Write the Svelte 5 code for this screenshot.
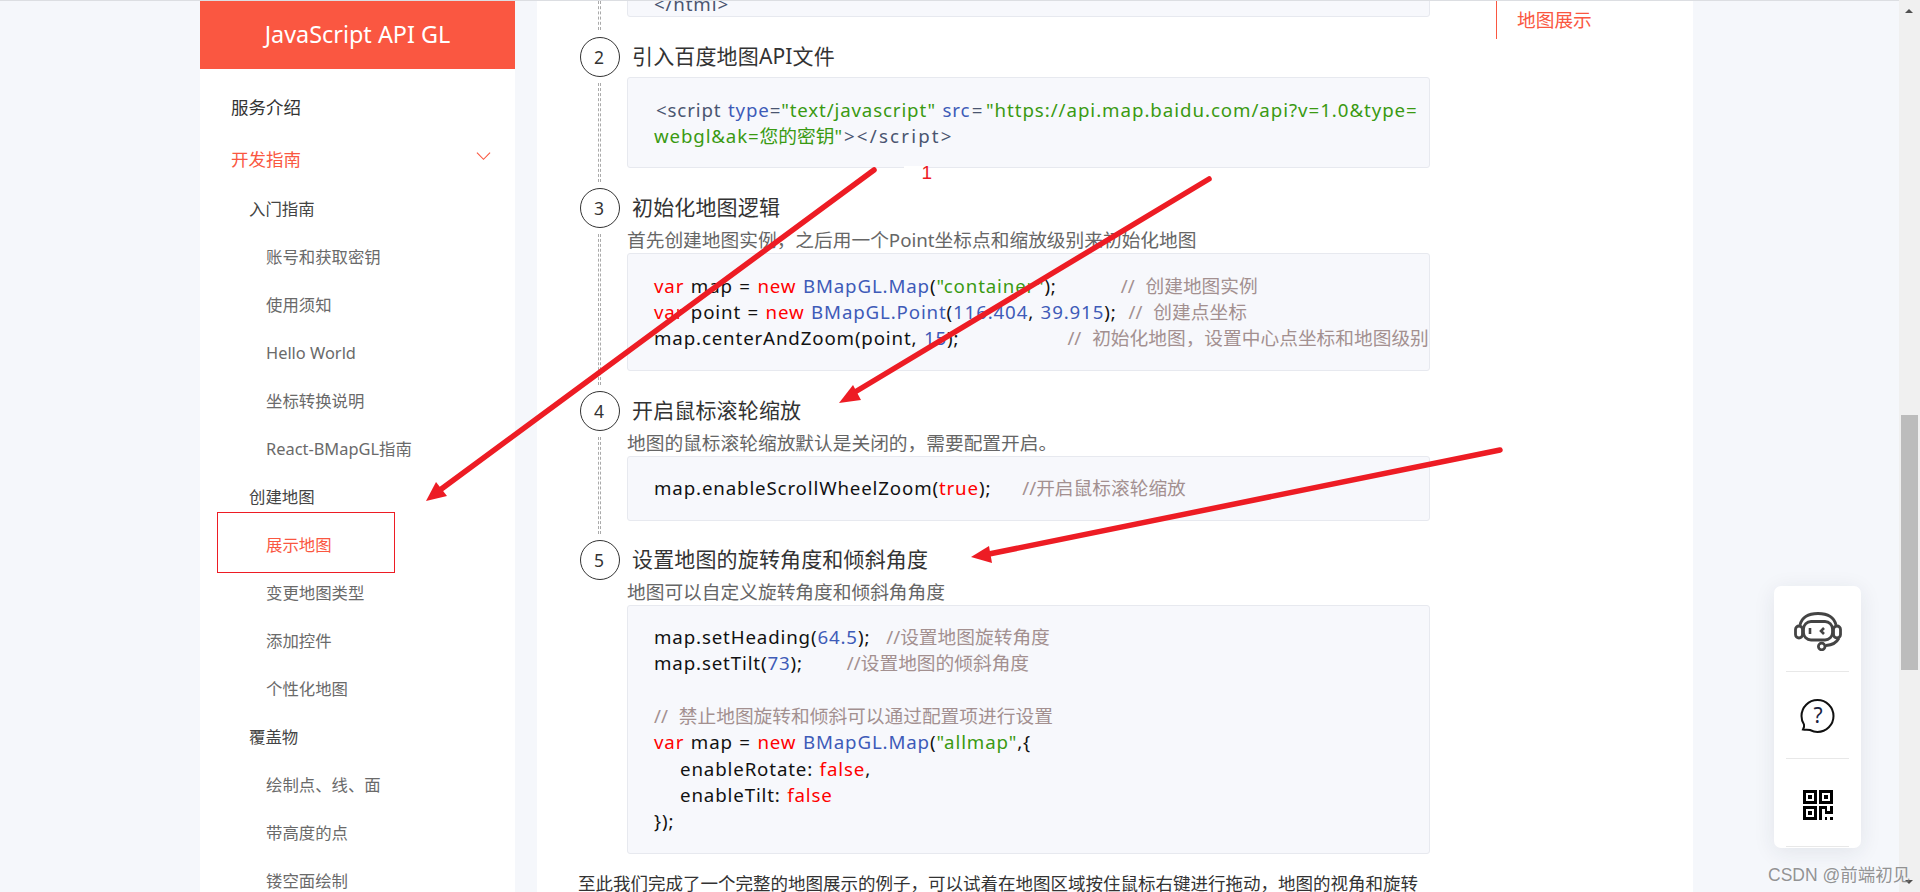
<script>
  const nav = [
    { t: '服务介绍', l: 1 },
    { t: '开发指南', l: 1, active: true, open: true },
    { t: '入门指南', l: 2 },
    { t: '账号和获取密钥', l: 3 },
    { t: '使用须知', l: 3 },
    { t: 'Hello World', l: 3 },
    { t: '坐标转换说明', l: 3 },
    { t: 'React-BMapGL指南', l: 3 },
    { t: '创建地图', l: 2 },
    { t: '展示地图', l: 3, active: true },
    { t: '变更地图类型', l: 3 },
    { t: '添加控件', l: 3 },
    { t: '个性化地图', l: 3 },
    { t: '覆盖物', l: 2 },
    { t: '绘制点、线、面', l: 3 },
    { t: '带高度的点', l: 3 },
    { t: '镂空面绘制', l: 3 }
  ];
</script>

<div class="page">
  <div class="view">
    <aside class="side">
      <div class="brand">JavaScript API GL</div>
      <ul class="nav">
        {#each nav as item}
          <li class="item l{item.l}" class:active={item.active}>
            <span>{item.t}</span>
            {#if item.open}
              <svg class="chev" width="16" height="10" viewBox="0 0 16 10"><path d="M1 1.5 L8 8.5 L15 1.5" fill="none" stroke="#fa5741" stroke-width="1.2"/></svg>
            {/if}
          </li>
        {/each}
      </ul>
    </aside>

    <main class="doc">
      <section class="step tail">
        <div class="rail"><i class="dash"></i></div>
        <div class="body">
          <pre class="code cut"><span class="tag">&lt;/html&gt;</span></pre>
        </div>
      </section>

      <section class="step">
        <div class="rail"><b class="num">2</b><i class="dash"></i></div>
        <div class="body">
          <h3>引入百度地图API文件</h3>
          <pre class="code"><span class="tag first">&lt;script</span> <span class="cls">type</span><span class="tag">=</span><span class="str">"text/javascript"</span> <span class="cls">src</span><span class="tag eq">=</span><span class="str wide">"https://api.map.baidu.com/api?v=1.0&amp;type=</span>
<span class="str">webgl&amp;ak=<span class="zh">您的密钥</span>"</span><span class="tag close">&gt;&lt;/script&gt;</span></pre>
        </div>
      </section>

      <section class="step">
        <div class="rail"><b class="num">3</b><i class="dash"></i></div>
        <div class="body">
          <h3>初始化地图逻辑</h3>
          <p class="desc">首先创建地图实例，之后用一个Point坐标点和缩放级别来初始化地图</p>
          <pre class="code"><span class="kw">var</span> map = <span class="kw">new</span> <span class="cls">BMapGL.Map</span>(<span class="str">"container"</span>);<span class="com c1">// 创建地图实例</span>
<span class="kw">var</span> point = <span class="kw">new</span> <span class="cls">BMapGL.Point</span>(<span class="cls">116.404</span>, <span class="cls">39.915</span>);<span class="com c2">// 创建点坐标</span>
map.centerAndZoom(point, <span class="cls">15</span>);<span class="com c3">// 初始化地图，设置中心点坐标和地图级别</span></pre>
        </div>
      </section>

      <section class="step four">
        <div class="rail"><b class="num">4</b><i class="dash"></i></div>
        <div class="body">
          <h3>开启鼠标滚轮缩放</h3>
          <p class="desc">地图的鼠标滚轮缩放默认是关闭的，需要配置开启。</p>
          <pre class="code"><span>map.enableScrollWheelZoom(</span><span class="kw">true</span>);<span class="com c4">//开启鼠标滚轮缩放</span></pre>
        </div>
      </section>

      <section class="step last">
        <div class="rail"><b class="num">5</b></div>
        <div class="body">
          <h3>设置地图的旋转角度和倾斜角度</h3>
          <p class="desc">地图可以自定义旋转角度和倾斜角角度</p>
          <pre class="code">map.setHeading(<span class="cls">64.5</span>);<span class="com c5">//设置地图旋转角度</span>
map.setTilt(<span class="cls">73</span>);<span class="com c6">//设置地图的倾斜角度</span>

<span class="com">// 禁止地图旋转和倾斜可以通过配置项进行设置</span>
<span class="kw">var</span> map = <span class="kw">new</span> <span class="cls">BMapGL.Map</span>(<span class="str">"allmap"</span>,&#123;
    enableRotate: <span class="kw">false</span>,
    enableTilt: <span class="kw">false</span>
&#125;);</pre>
        </div>
      </section>

      <p class="outro">至此我们完成了一个完整的地图展示的例子，可以试着在地图区域按住鼠标右键进行拖动，地图的视角和旋转</p>

      <nav class="toc"><span>地图展示</span></nav>
    </main>

    <div class="float">
      <div class="cell one">
        <svg width="48" height="39" viewBox="0 0 48 39" fill="none" stroke="#444" stroke-width="2.8">
          <path d="M6 13 C8 5 15 1.500 24 1.500 C33 1.500 40 5 42 13"/>
          <rect x="9.5" y="9.5" width="29" height="18.5" rx="7.5"/>
          <rect x="1.500" y="14" width="7" height="12" rx="3.5"/>
          <rect x="39.500" y="14" width="7" height="12" rx="3.5"/>
          <path d="M16 16 V22 M30 16 L27 19 L30 22" stroke-width="2.6"/>
          <path d="M45 26 C43 30 38 33 32 33.5"/>
          <circle cx="27.7" cy="34.5" r="3.3"/>
        </svg>
      </div>
      <div class="cell two">
        <svg width="36" height="36" viewBox="0 0 36 36">
          <path d="M3 31.5 C4 29.5 4.5 28 4 26.5 C1.800 23.500 1.500 20.500 1.500 18 A16 16 0 1 1 17.500 34 C14.500 34 12 33 10 32 C8 31.500 5.500 32 3 31.500 Z" fill="none" stroke="#111" stroke-width="2"/>
          <text x="18" y="25" text-anchor="middle" class="qm">?</text>
        </svg>
      </div>
      <div class="cell three">
        <svg width="30" height="30" viewBox="0 0 30 30" fill="#000">
          <path fill-rule="evenodd" d="M0 0H14V14H0Z M3 3V11H11V3Z M16 0H30V14H16Z M19 3V11H27V3Z M0 16H14V30H0Z M3 19V27H11V19Z"/>
          <rect x="5" y="5" width="4" height="4"/>
          <rect x="21" y="5" width="4" height="4"/>
          <rect x="5" y="21" width="4" height="4"/>
          <path d="M16 16H19V30H16Z M19 16H24V19H19Z M22 19H24V24H22Z M24 21H27V24H24Z M27 16H30V24H27Z M22 27H24V30H22Z M27 27H30V30H27Z"/>
        </svg>
      </div>
    </div>

    <span class="mark">CSDN @前端初见</span>
  </div>

  <div class="bar">
    <i class="up"></i>
    <i class="thumb"></i>
    <i class="down"></i>
  </div>

  <svg class="marks" width="1920" height="892" viewBox="0 0 1920 892">
    <rect x="217.500" y="512.500" width="177" height="60" fill="none" stroke="#ed1c24" stroke-width="1"/>
    <rect x="904" y="166" width="20" height="5" fill="#fff"/>
    <text x="921.500" y="179" class="one-mark">1</text>
    <g stroke="#ed1c24" stroke-width="5.500" stroke-linecap="round" fill="#ed1c24">
      <line x1="874" y1="170" x2="440" y2="490"/>
      <line x1="1209" y1="179" x2="855" y2="392"/>
      <line x1="1500" y1="450" x2="989" y2="554"/>
    </g>
    <g fill="#ed1c24">
      <polygon points="426,501 436,482 447,496"/>
      <polygon points="839,403 853,385 861,400"/>
      <polygon points="971,557 989,546 992,563"/>
    </g>
  </svg>
</div>

<style>
  :global(html), :global(body) {
    margin: 0;
    height: 892px;
    overflow: hidden;
  }
  .page {
    position: relative;
    display: flex;
    width: 1920px;
    height: 892px;
    overflow: hidden;
    font-family: "Noto Sans", "Noto Sans CJK SC", sans-serif;
    background: #f5f7fb;
  }
  .view {
    position: relative;
    flex: 1;
    display: flex;
    align-items: flex-start;
    padding-left: 200px;
    border-top: 1px solid #dcdee2;
    box-sizing: border-box;
    height: 892px;
  }
  .side {
    width: 315px;
    height: 891px;
    background: #fff;
    flex: none;
    overflow: hidden;
  }
  .brand {
    height: 68px;
    background: #fa5741;
    color: #fff;
    font-size: 23.400px;
    line-height: 66px;
    text-align: center;
  }
  .nav {
    list-style: none;
    margin: 0;
    padding: 11px 0 0;
  }
  .item {
    position: relative;
    height: 48px;
    display: flex;
    align-items: center;
    font-size: 16.4px;
  }
  .l1 {
    height: 52px;
    padding-left: 31px;
    font-size: 17.5px;
    color: #333;
  }
  .l2 {
    padding-left: 49px;
    color: #444;
  }
  .l3 {
    padding-left: 66px;
    color: #6a6a6a;
  }
  .item.active {
    color: #fa5741;
  }
  .chev {
    position: absolute;
    left: 276px;
    top: 19px;
    width: 15px;
  }
  .doc {
    position: relative;
    width: 1156px;
    height: 891px;
    margin-left: 22px;
    padding-left: 43px;
    box-sizing: border-box;
    background: #fff;
    flex: none;
    overflow: hidden;
  }
  .step {
    display: grid;
    grid-template-columns: 47px 803px;
  }
  .rail {
    display: flex;
    flex-direction: column;
  }
  .num {
    flex: none;
    width: 40px;
    height: 40px;
    box-sizing: border-box;
    border: 1px solid #333;
    border-radius: 50%;
    padding-right: 2px;
    display: flex;
    align-items: center;
    justify-content: center;
    font-size: 17.5px;
    font-weight: 400;
    color: #333;
  }
  .dash {
    flex: 1;
    width: 1px;
    margin: 6px 0 6px 18px;
    border-left: 1px dashed #aaa;
    border-right: 1px dashed #aaa;
  }
  .tail .dash {
    margin-top: 0;
    margin-bottom: 7px;
  }
  .body {
    padding-bottom: 20px;
    min-width: 0;
  }
  .four .body {
    padding-bottom: 19px;
  }
  .last .body {
    padding-bottom: 0;
  }
  h3 {
    margin: 0;
    height: 40px;
    padding-left: 5px;
    font-size: 21px;
    font-weight: 400;
    line-height: 38px;
    letter-spacing: 0.15px;
    color: #333;
  }
  .desc {
    margin: 0;
    height: 25px;
    font-size: 18.72px;
    line-height: 23px;
    color: #666;
    white-space: nowrap;
  }
  .code {
    margin: 0;
    padding: 18.300px 0 18.300px 26px;
    border: 1px solid #e7e9ef;
    border-radius: 3px;
    background: #f7f8fc;
    font-family: "Noto Sans", "Noto Sans CJK SC", sans-serif;
    font-size: 18.720px;
    line-height: 26.300px;
    letter-spacing: 0.85px;
    word-spacing: 0.8px;
    color: #111;
    white-space: pre;
    overflow: hidden;
  }
  .cut {
    padding-top: 2px;
    padding-bottom: 1px;
    margin-top: -13px;
    height: 24.300px;
  }
  .first {
    margin-left: 2px;
  }
  .eq {
    letter-spacing: 3.500px;
    margin-left: 1.500px;
  }
  .wide { letter-spacing: 0.94px; }
  .close { letter-spacing: 2.200px; margin-left: 1px; }
  .zh { letter-spacing: 0; }
  .kw { color: #f00; }
  .cls { color: #3e5bb8; }
  .str { color: #3a9a12; }
  .tag { color: #4a5570; }
  .com {
    color: #a39090;
    letter-spacing: 0;
    word-spacing: 6px;
  }
  .c1 { margin-left: 64px; }
  .c2 { margin-left: 12px; }
  .c3 { margin-left: 108px; }
  .c4 { margin-left: 31px; }
  .c5 { margin-left: 16px; }
  .c6 { margin-left: 44px; }
  .outro {
    margin: 16px 0 0 -2px;
    width: 845px;
    font-size: 17.500px;
    line-height: 26px;
    color: #333;
    white-space: nowrap;
  }
  .toc {
    position: absolute;
    left: 959px;
    top: 0;
    height: 38px;
    padding-left: 20px;
    border-left: 1px solid #fa5741;
    font-size: 18.720px;
    line-height: 37px;
    color: #fa5741;
  }
  .float {
    position: absolute;
    left: 1774px;
    top: 585px;
    width: 87px;
    height: 262px;
    box-sizing: border-box;
    padding: 0 12px;
    background: #fff;
    border-radius: 7px;
    box-shadow: 0 4px 22px rgba(30, 40, 70, 0.09);
  }
  .cell {
    display: flex;
    align-items: center;
    justify-content: center;
    box-sizing: border-box;
    border-bottom: 1px solid #e8e8e8;
  }
  .one { height: 86px; padding-top: 6px; }
  .two { height: 87px; padding-top: 2px; }
  .three { height: 88px; padding-top: 4px; }
  .qm {
    font-family: "Noto Sans", sans-serif;
    font-size: 21px;
    fill: #1a2440;
  }
  .mark {
    position: absolute;
    left: 1768px;
    top: 862px;
    font-family: "Liberation Sans", "Noto Sans CJK SC", sans-serif;
    font-size: 17.500px;
    line-height: 24px;
    color: rgba(120, 120, 120, 0.8);
    white-space: nowrap;
    z-index: 2;
  }
  .bar {
    position: relative;
    flex: none;
    width: 21px;
    height: 892px;
    background: #f0f0f0;
  }
  .up, .down {
    position: absolute;
    left: 6px;
    width: 0;
    height: 0;
    border-left: 4.500px solid transparent;
    border-right: 4.500px solid transparent;
  }
  .up {
    top: 9px;
    border-bottom: 4px solid #505050;
  }
  .down {
    top: 880px;
    border-top: 4px solid #505050;
  }
  .thumb {
    position: absolute;
    left: 2px;
    top: 415px;
    width: 17px;
    height: 255px;
    background: #bcbcbc;
  }
  .marks {
    position: absolute;
    left: 0;
    top: 0;
    pointer-events: none;
    z-index: 3;
  }
  .one-mark {
    font-family: "Liberation Sans", sans-serif;
    font-size: 19px;
    fill: #ed1c24;
  }
</style>
